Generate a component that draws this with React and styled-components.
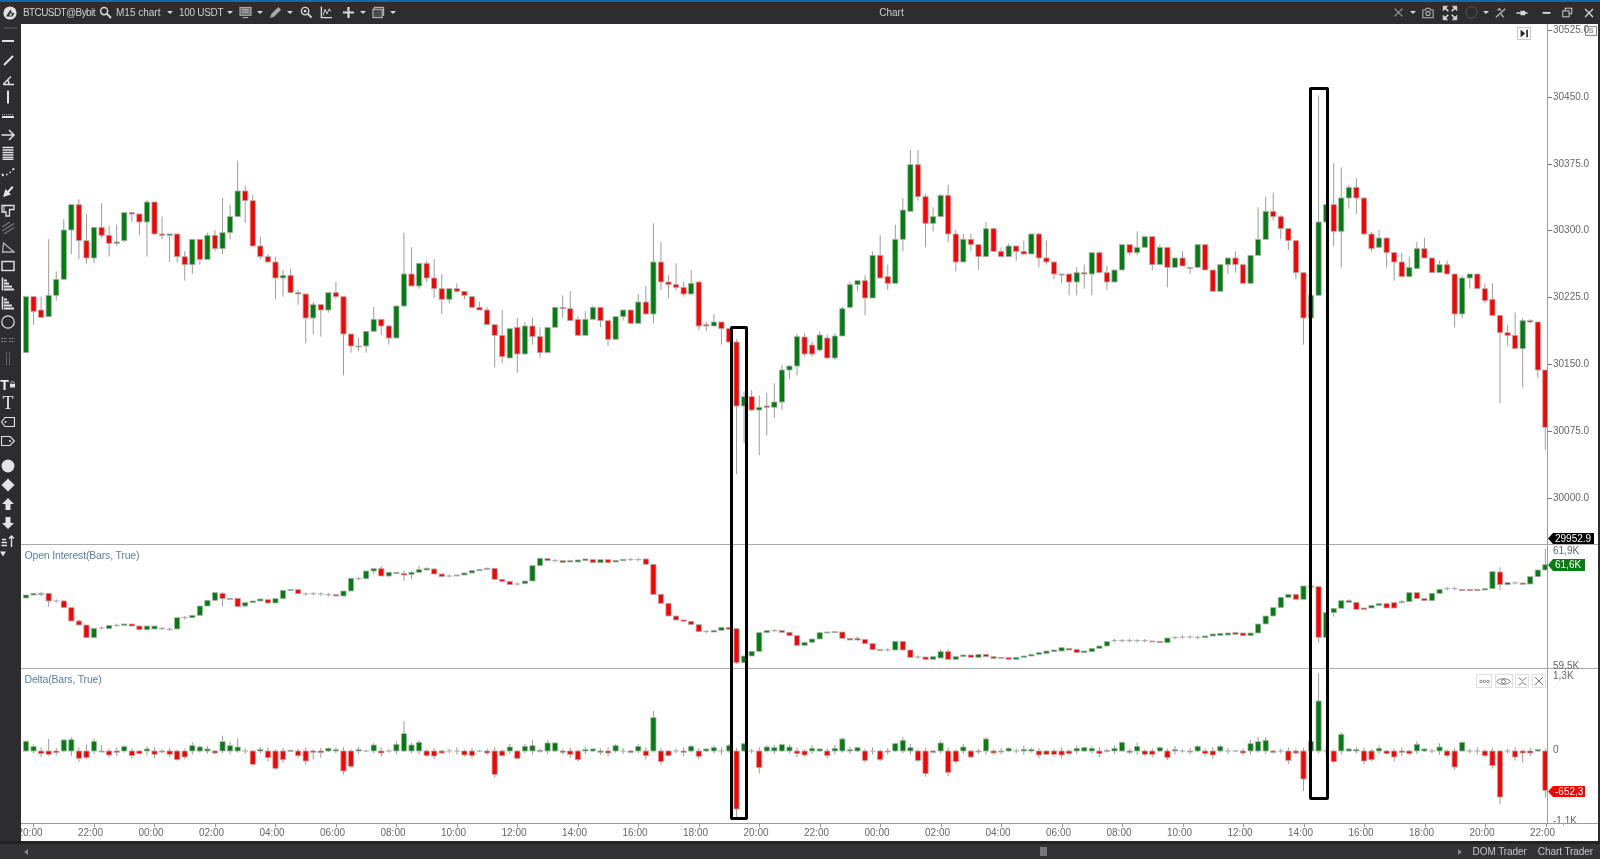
import React from 'react'
import styled, { createGlobalStyle } from 'styled-components'

const GlobalStyle = createGlobalStyle`
html, body {
  margin: 0;
  height: 100%;
  overflow: hidden;
  background: #fff;
  font-family: "Liberation Sans", Arial, sans-serif;
}
`

// price candles: colour, body top, body bottom, wick top, wick bottom
// values are measured in thirds of a pixel from the origin of each block
const PRICE_A = `g 290 458,r 290 334 290 374,r 330 352 290 352,g 286 350 118 350,g 238 286 214 302,g 90 238 58 238,g 14 90 14 162,r 14 122 -2 178,r 122 174 42 190,g 82 174 82 190,
r 82 106 10 114,r 106 130 78 170,g 126 130 74 138,g 38 122 38 126,r 38 42 34 66,r 42 66 42 106,g 6 66 0 170,r 6 102,r 102 106 50 118,g 102 106 102 186,
r 102 170 102 186,r 170 194 154 242,g 118 194 118 222,r 118 178 118 194,g 106 178 98 178,r 106 146 90 154,g 98 146 -6 162,g 50 98 14 118,g -27 50 -118 50,r -27 2 -42 70,
r 2 138 -15 138,r 138 170 110 178,r 170 186 162 186,r 186 234 170 298,g 226 234 210 290,r 226 278 206 278,r 278 282 270 314,r 282 354 282 430,g 314 354 306 402,r 314 330 314 410,
g 278 330 278 338,r 278 290 246 298,r 290 402 290 526,r 402 438 402 458,r 438 438 414 454,g 394 438 394 458,g 358 394 322 394,r 358 378 358 406,r 378 414 374 434,g 318 414,
g 222 318 98 322,r 222 258 142 258,g 190 258 190 266,r 190 234 182 246,r 234 266 178 294,r 266 298 222 342,g 266 298 266 310,r 266 274 250 278,r 274 286 274 298,r 290 322,
r 322 330 306 330,r 330 374 322 374,r 374 406 374 502,r 406 470 330 490,g 386 474,r 382 462 354 518,g 378 462 366 462,r 378 410 354 434,r 410 458 382 474,g 382 458,
g 322 382,r 322 326 286 354,r 326 362 274 362,r 358 406 350 406,g 358 406 334 406,g 322 358 318 358,r 322 362 322 382,r 362 418 362 438,g 350 418,g 330 350 330 362,
r 330 370,g 306 370 282 370,r 306 342 258 342,g 186 342 70 370,r 186 246 126 270,r 246 254 226 294,r 254 262 190 270,r 262 282 246 290,g 250 282 210 282,r 246 378 246 390,
r 374 378 366 394,g 366 378 342 378,r 366 386 366 434,r 386 426,r 426 618 418 822,g 590 618 574 730,r 590 630 570 634,g 622 630 586 766,r 618 622 578 706,g 606 622 550 654,
g 510 606 494 630,g 498 510 498 538,g 410 498 402 526,r 411 462 400 470,r 435 462 425 470,g 405 450 395 455,r 414 474 405 474,g 408 474 400 480`

const PRICE_B = `g 536 618 530 618,g 464 532 456 536,g 452 464 452 484,r 452 504 436 556,g 376 504 364 504,r 376 444 316 444,r 440 460 404 480,g 328 460 284 460,g 240 328 204 364,g 104 244 60 244,
r 104 200 60 212,r 200 280 192 352,g 260 280 232 304,g 196 260 192 260,r 196 312 164 336,r 312 396 300 424,g 328 396 312 396,r 328 344 312 364,r 344 380 344 420,g 296 380 276 380,
r 296 364 292 364,r 364 380 352 380,g 348 380 340 380,r 348 364 348 392,r 364 372 332 376,g 312 372,r 312 384 308 412,r 384 396 332 404,r 396 432 396 448,r 432 433 432 460,
r 432 456 432 496,g 428 456 412 496,r 428 432 404 476,g 368 432 368 496,r 368 428 364 428,r 428 456 408 480,g 420 456,g 344 420,r 344 368 344 376,g 352 368 304 376,
g 320 352,r 320 404 320 420,g 352 404 344 404,r 352 412 352 472,g 384 412,r 384 408 364 408,r 412 412 412 432,g 344 412`

const PRICE_C = `r 494 570,r 570 634,g 554 634,g 534 554 534 582,r 534 554 514 578,r 554 610,g 526 610,g 478 526 382 526,g 394 478 350 478,r 394 410 338 422,
r 410 446 406 478,r 446 482 446 510,r 482 578 482 598,r 578 714 578 794,g 646 714 620 750,g 426 646 46 646,g 374 426,r 374 454 250 498,g 354 454 262 562,g 322 354 314 386,
r 322 354 294 402,r 354 462,r 462 506 456 514,g 474 502 450 502,r 474 518 474 562,r 518 546 518 602,r 546 590 518 590,g 562 590 530 590,g 506 566 486 566,r 506 534 474 534,
r 534 578,g 554 578 542 578,r 554 582 542 582,r 582 702 582 742,g 594 702 586 714,g 582 594 582 626,r 582 626,r 626 662 610 670,r 658 706 610 706,r 706 758 706 970,
r 758 766 734 798,r 766 806 698 806,g 722 806 714 922,r 722 726 718 730,r 726 870 726 894,r 870 1042 870 1110`

// open interest, "d" is a doji drawn as a small grey dash
const OI_DATA = `g 165 174,g 160 165,g 160 163 155 168,r 160 183 160 200,d 183,r 183 203 180 203,r 203 243,r 243 255 238 255,r 255 293,g 265 293,
d 264,g 256 266,d 256,g 252 256,r 252 258,r 258 269 258 272,g 258 269 258 272,g 258 267,d 266,d 268,
g 233 267,d 233,g 226 233,g 198 226,g 181 198,g 158 181,r 160 176 156 200,r 175 176,r 175 200,g 188 198 188 202,
g 183 188,g 177 183,r 179 189,g 176 189,g 151 176,g 149 151,r 149 161,d 162,d 161,d 162,
d 164,r 164 168,g 153 168,g 115 153,d 116,g 93 116,g 86 93 86 103,r 86 108 78 108,g 97 108 97 112,g 97 101,
r 100 105 92 122,g 97 103 94 118,g 89 97 78 97,g 85 90 82 90,r 87 102 84 102,r 102 110,d 108,g 105 108,g 99 105,g 92 99,
g 88 92,g 85 88 82 88,r 85 118,r 118 124,r 124 134,d 132,g 123 131,g 77 123,g 55 77,r 56 62,
d 62,r 62 67,g 62 66,g 60 66,g 57 62,r 59 68,g 59 68,r 59 68,g 61 66,g 58 62,
d 59,d 59,r 57 73,r 73 163,r 163 190,r 190 228,r 228 240,r 240 244,r 244 254,r 254 275,
d 275,g 271 276,g 262 271,r 263 268,r 266 368 266 372,g 348 368,g 334 348,g 278 334,g 272 278,d 272,
r 272 277,r 277 287,r 287 316,g 307 316,g 297 307,g 278 297,g 276 278,g 275 278,r 276 295,r 295 300,
r 295 300 290 302,r 298 311,r 311 329,r 329 332,d 330,g 304 330,r 304 330,r 330 352,d 351,r 351 358,
g 350 358,g 335 354 328 354,r 335 358 328 358,g 350 358,g 345 350,r 345 352,g 343 352,r 343 350,r 350 355,r 352 355,
r 353 358,g 352 358,g 348 352,g 343 348,g 338 343,g 333 340,g 330 335,g 323 333,r 325 330,r 328 338,
g 333 338,g 325 335,g 318 325,g 305 318,d 302,d 302,d 302,d 302,d 302,r 303 305,
r 304 308,g 294 308,d 293,d 291,d 291,d 292,g 288 293,g 282 288,g 280 286,g 279 285,
r 278 283,r 279 287,g 279 287,g 252 279,g 228 252,g 203 228,g 172 203,g 163 172,r 163 178,g 138 178,
g 138 140,r 140 292 140 308,g 218 292,g 205 218 205 230,g 182 205,r 182 187 178 187,r 187 208,r 204 208,g 196 204,g 191 196,
r 191 204,r 188 204,g 185 188 180 190,g 158 185,r 158 176,r 176 182,g 160 182,g 148 160,d 146,d 146,
r 148 152,r 148 152,r 148 152,g 146 150,g 95 146,r 96 134 82 150,g 128 134,d 129,r 129 133,g 110 132,
g 90 110,g 74 90 26 90`

// delta value, optional :wick end, signed, up from the zero line
const DELTA_DATA = `29 13 -8 -10:36 -5 33 34:-15 -22 -20:20 29 -1:18 -12 -4 13 -14 -8 6:-14 -10 -2
-10 -26 -18 16 12 6 -6 28:46 16 12:38 0 -40 5 -20 -52 -26 2 -14 -30 -4:-25 -5:-20 8 4 -60 -46 4 0 18 -6 0 20 52:90
18 26:32 -14 -15 -6 0 0 -12 -14 0 -6 -70:-80 -14 12 -22 14 16:34 2 24 24 -4 -10 -26 4 6 -4 -6 16 0 -4 14 -14 100:120
-32 -14 0 -4 14 -16 6 10 0:-12 16 -174:-200 22 0 -50:-68 12 10 19 12 -8
-12 8 6 -14 8 36 4 10 -28 0 -26 -2 22 32:42 10 -28 -68 -4 24 -64 -32 12 -18 -2 36:42 -6 -1 8 0 5 5 -12 -10 -10 -12 -8
8 10 8 -8 2 8 26 -4 14 -10 -10 10 -20 4 0 -1 14 -8 -12 14 0 0 -6 22 28:42 32:42 -4 0 -28 -6 -84:-120 28 150:234 0 -32
50:56 6 4 -30 -26 8 -8 -18:-32 -4 -8 20 6 0 12 -14 -48 26 0 0 -14 -44 -138:-160 0 -18 -6:-34 -6 4 -118:-140`

const STEP = 7.559
const FIRST_X = 26

const parseBlock = (text, origin) =>
  text.split(',').map((row) => {
    const [c, t, b = t, wt, wb] = row.trim().split(/\s+/)
    const top = Number(t)
    const bottom = Number(b)
    const wickTop = wt !== undefined ? Number(wt) : c === 'd' ? top - 5 : top
    const wickBottom = wb !== undefined ? Number(wb) : c === 'd' ? bottom + 5 : bottom
    return {
      c,
      top: origin + top / 3,
      bottom: origin + bottom / 3,
      wickTop: origin + wickTop / 3,
      wickBottom: origin + wickBottom / 3,
    }
  })

const priceCandles = [
  ...parseBlock(PRICE_A, 200),
  ...parseBlock(PRICE_B, 130),
  ...parseBlock(PRICE_C, 80),
]
const oiCandles = parseBlock(OI_DATA, 540)
const ZERO = 751
const deltaCandles = DELTA_DATA.trim()
  .split(/\s+/)
  .map((item, i) => {
    const [v, w] = item.split(':').map(Number)
    const extra = 3 + ((i * 7) % 5) * 2
    const up = w !== undefined && w > 0 ? w : v > 0 ? v + extra : extra
    const down = w !== undefined && w < 0 ? w : v < 0 ? v - extra : -extra
    return {
      c: v === 0 ? 'd' : v > 0 ? 'g' : 'r',
      top: ZERO - Math.max(v, 0) / 3,
      bottom: ZERO - Math.min(v, 0) / 3,
      wickTop: ZERO - up / 3,
      wickBottom: ZERO - down / 3,
    }
  })

const BODY = { g: '#007f0e', r: '#ff0000', d: '#8a8a8a' }

const CandleChart = ({ top, height, candles }) => (
  <Plot viewBox={`21 ${top} 1526 ${height}`} width="1526" height={height}>
    <rect x="18" y="350" width="3" height="3" fill={BODY.r} />
    {candles.map((k, i) => {
      const x = FIRST_X + STEP * i
      return (
        <g key={i}>
          <line x1={x} x2={x} y1={k.wickTop} y2={k.wickBottom} stroke="#9c9c9c" strokeWidth="1" />
          {k.c === 'd' ? (
            <line x1={x - 3} x2={x + 3} y1={k.top} y2={k.top} stroke="#a8a8a8" strokeWidth="1" />
          ) : (
            <rect
              x={x - 2.6}
              y={k.top}
              width="5.2"
              height={Math.max(k.bottom - k.top, 1)}
              fill={BODY[k.c]}
              stroke="#aeb0ae"
              strokeWidth=".8"
            />
          )}
        </g>
      )
    })}
  </Plot>
)

const Ico = ({ size = 14, children, ...rest }) => (
  <svg width={size} height={size} viewBox="0 0 14 14" fill="none" stroke="currentColor" {...rest}>
    {children}
  </svg>
)

const Shell = styled.div`
  height: 859px;
  width: 1600px;
  display: flex;
  flex-direction: column;
  background: #2d2d30;
  filter: blur(0.4px);
`
const TopBar = styled.div`
  height: 24px;
  box-sizing: border-box;
  border-top: 2px solid #0a6db4;
  display: flex;
  align-items: center;
  color: #d4d4d4;
  font-size: 10px;
  padding: 0 0 1px 3px;
`
const Slot = styled.div`
  width: ${(p) => p.$w}px;
  margin-left: ${(p) => p.$ml || 0}px;
  flex: none;
  display: flex;
  justify-content: center;
  align-items: center;
  color: ${(p) => p.$color || '#d8d8d8'};
`
const BarText = styled.span`
  width: ${(p) => p.$w}px;
  margin-left: ${(p) => p.$ml || 0}px;
  flex: none;
  letter-spacing: ${(p) => p.$track || 0}px;
  white-space: nowrap;
  color: #cfcfcf;
`
const Caret = styled.span`
  width: 0;
  height: 0;
  border-left: 3.5px solid transparent;
  border-right: 3.5px solid transparent;
  border-top: 3.5px solid #d8d8d8;
`
const Title = styled.div`
  flex: 1;
  text-align: center;
  padding-right: 4px;
  color: #cfcfcf;
`
const Middle = styled.div`
  flex: 1;
  display: flex;
  min-height: 0;
`
const ToolRail = styled.div`
  width: 21px;
  flex: none;
  display: flex;
  flex-direction: column;
  color: #e4e4e4;
`
const Grip = styled.div`
  height: 8px;
  margin: 0 4px;
  background: radial-gradient(circle, #666 0.6px, transparent 0.8px) 0 3px / 2px 2px repeat-x;
`
const ToolCell = styled.div`
  height: 18.7px;
  flex: none;
  display: flex;
  align-items: ${(p) => (p.$corner ? 'flex-start' : 'center')};
  justify-content: ${(p) => (p.$corner ? 'flex-start' : 'center')};
  padding-right: 5px;
  box-sizing: border-box;
`
const ToolLetter = styled.span`
  font-family: "Liberation Serif", serif;
  font-size: 18px;
  line-height: 18px;
  color: #ececec;
`
const BoldLetter = styled.span`
  font-weight: 700;
  font-size: 14px;
  line-height: 14px;
  color: #ececec;
`
const ToolGap = styled.div`
  height: 7px;
  flex: none;
  margin: 0 3px;
  background: radial-gradient(circle, #555 0.5px, transparent 0.7px) 0 2px / 2px 2px repeat-x;
`
const ChartArea = styled.div`
  flex: 1;
  display: flex;
  flex-direction: column;
  position: relative;
  background: #fff;
  border-right: 2px solid #2d2d30;
`
const Pane = styled.div`
  height: ${(p) => p.$h}px;
  flex: none;
  display: flex;
  position: relative;
  border-bottom: ${(p) => (p.$line ? '1px solid #a9a9a9' : '0')};
`
const Plot = styled.svg`
  display: block;
  flex: none;
`
const Scale = styled.div`
  flex: 1;
  border-left: 1px solid #9c9c9c;
  display: flex;
  flex-direction: column;
  padding-top: ${(p) => p.$pad}px;
  font-size: 10px;
  line-height: 10px;
  color: #666;
  position: relative;
`
const ScaleRow = styled.div`
  height: ${(p) => p.$h}px;
  flex: none;
  display: flex;
  padding-left: ${(p) => (p.$tick ? 0 : 5)}px;
  white-space: nowrap;
  &::before {
    content: '';
    display: ${(p) => (p.$tick ? 'block' : 'none')};
    width: 4px;
    height: 1px;
    margin: 5px 1px 0 0;
    background: #777;
  }
`
const PriceTag = styled.div`
  position: absolute;
  left: 0;
  top: ${(p) => p.$top}px;
  width: ${(p) => p.$w}px;
  height: ${(p) => p.$hgt}px;
  box-sizing: border-box;
  padding-left: 7px;
  background: ${(p) => p.$bg};
  color: #fff;
  font-size: 10px;
  line-height: ${(p) => p.$hgt}px;
  white-space: nowrap;
  clip-path: polygon(5px 0, 100% 0, 100% 100%, 5px 100%, 0 50%);
`
const Legend = styled.div`
  position: absolute;
  left: 3.5px;
  top: ${(p) => p.$top}px;
  font-size: 10.5px;
  line-height: 12px;
  letter-spacing: -0.17px;
  color: #5c7da3;
`
const SmallBox = styled.div`
  position: absolute;
  right: 1px;
  top: 2px;
  width: 10px;
  height: 8px;
  border: 1px solid #8a8a8a;
  font-size: 7px;
  line-height: 8px;
  text-align: center;
  color: #555;
`
const JumpButton = styled.div`
  position: absolute;
  left: 1496px;
  top: 3px;
  width: 14px;
  height: 13px;
  box-sizing: border-box;
  border: 1px solid #c9c9c9;
  display: flex;
  align-items: center;
  justify-content: center;
  color: #222;
`
const PaneButtons = styled.div`
  position: absolute;
  left: 1455px;
  top: 5px;
  display: flex;
  gap: 2.5px;
  color: #666;
`
const PaneButton = styled.div`
  width: ${(p) => p.$w}px;
  height: 14px;
  box-sizing: border-box;
  border: 1px solid #e0e0e0;
  background: #fff;
  display: flex;
  align-items: center;
  justify-content: center;
`
const TimeAxis = styled.div`
  height: 18px;
  flex: none;
  box-sizing: border-box;
  border-top: 1px solid #9c9c9c;
  display: grid;
  grid-template-columns: repeat(26, 60.5px);
  margin-left: -18.25px;
  overflow: hidden;
  font-size: 10px;
  color: #666;
  clip-path: inset(0 0 0 18.25px);
`
const TimeCell = styled.div`
  position: relative;
  line-height: 18px;
  text-align: center;
  padding-right: 6px;
  white-space: nowrap;
  &::before {
    content: '';
    position: absolute;
    left: 50%;
    top: 0;
    width: 1px;
    height: 3px;
    background: #999;
  }
`
const Highlight = styled.div`
  position: absolute;
  left: ${(p) => p.$x}px;
  top: ${(p) => p.$y}px;
  width: ${(p) => p.$w}px;
  height: ${(p) => p.$hgt}px;
  box-sizing: border-box;
  border: 3px solid #000;
  border-radius: 2px;
  pointer-events: none;
`
const BottomBar = styled.div`
  height: 18px;
  flex: none;
  box-sizing: border-box;
  border-top: 3px solid #232325;
  background: #333337;
  display: flex;
  align-items: center;
  padding-left: 24px;
  font-size: 10px;
  letter-spacing: -0.08px;
  color: #c8c8c8;
`
const ScrollArrow = styled.span`
  width: 0;
  height: 0;
  border-top: 3px solid transparent;
  border-bottom: 3px solid transparent;
  border-${(p) => (p.$dir === 'left' ? 'right' : 'left')}: 4px solid #888;
`
const Thumb = styled.div`
  width: 7px;
  height: 9px;
  background: #77777a;
  margin-left: 1012px;
`
const BottomRight = styled.div`
  margin-left: auto;
  display: flex;
  align-items: center;
  gap: 11px;
  padding-right: 7px;
`

const toolRows = [
  <Ico><rect x="1" y="6" width="12" height="2" fill="currentColor" stroke="none" /></Ico>,
  <Ico><path d="M3 12L12 3" strokeWidth="2" /></Ico>,
  <Ico><path d="M2 12.5H13M2.5 12L10 4.5M8 12.5a7 7 0 0 0-1.5-4.5" strokeWidth="1.4" /></Ico>,
  <Ico><path d="M7 0.5V13.5" strokeWidth="2" /></Ico>,
  <Ico><path d="M1 8H13" strokeWidth="2" /><path d="M1 5.5H13" strokeWidth="1" strokeDasharray="1 1" opacity=".7" /></Ico>,
  <Ico><path d="M0.5 7H13M8 2L13 7L8 12" strokeWidth="1.5" /></Ico>,
  <Ico><path d="M1.5 1.5H12.5M1.5 4H12.5M1.5 6.5H12.5M1.5 9H12.5M1.5 11.5H12.5" strokeWidth="1.5" /><path d="M1.5 13.5H12.5" strokeWidth="1.5" /></Ico>,
  <Ico><path d="M1 10.5C5 11 9 8 13 3.5" strokeWidth="1.2" strokeDasharray="2 2" /><circle cx="1.5" cy="9.5" r="1" fill="currentColor" stroke="none" /><circle cx="12.5" cy="4" r="1" fill="currentColor" stroke="none" /></Ico>,
  <Ico><path d="M2 13L4.5 5L6.5 7L11 2L12.5 3.5L8 8.5L10 10.5Z" fill="currentColor" stroke="none" /></Ico>,
  <Ico><path d="M1 2.5H13V6.5H8.5V13H5V9H1Z" strokeWidth="1.3" /><path d="M3 2.5V9" strokeWidth="1" /></Ico>,
  <Ico color="#7a7a7a"><path d="M1 6L9 1M1 10L13 2.5M3 13L13 6.5" strokeWidth="1.2" /></Ico>,
  <Ico color="#b5b5b5"><path d="M1.5 12H13L2.5 3Z" strokeWidth="1.3" /></Ico>,
  <Ico><rect x="1" y="2.5" width="12" height="9" strokeWidth="1.4" /></Ico>,
  <Ico><path d="M1.5 0.5V13.5" strokeWidth="1.6" /><path d="M3 12.5H13M3 9.5H11M3 6.5H8M3 3.5H6" strokeWidth="1.8" /></Ico>,
  <Ico><path d="M1.5 0.5V13.5" strokeWidth="1.6" /><path d="M3 12.5H13M3 9.5H11M3 6.5H8M3 3.5H6" strokeWidth="1.8" /></Ico>,
  <Ico><circle cx="7" cy="7" r="6.2" strokeWidth="1.2" /></Ico>,
  <Ico color="#9a9a9a"><path d="M0.5 5.5H6M8 5.5H13.5M0.5 8.5H6M8 8.5H13.5" strokeWidth="1" strokeDasharray="1.5 1" /></Ico>,
  <Ico color="#8a8a8a"><path d="M5.5 0.5V13.5M8.5 0.5V13.5" strokeWidth="1" strokeDasharray="1.5 1.2" /></Ico>,
]

const markRows = [
  <Ico><circle cx="7" cy="7" r="6.4" fill="currentColor" stroke="none" /></Ico>,
  <Ico><path d="M7 0.5L13.5 7L7 13.5L0.5 7Z" fill="currentColor" stroke="none" /></Ico>,
  <Ico><path d="M7 1L13 7H9.5V13H4.5V7H1Z" fill="currentColor" stroke="none" /></Ico>,
  <Ico><path d="M7 13L13 7H9.5V1H4.5V7H1Z" fill="currentColor" stroke="none" /></Ico>,
  <Ico><path d="M1 5.5H5M0.5 8.5H6M0.5 11.5H6" strokeWidth="1.4" /><path d="M10.5 13V2M8 4.5L10.5 2L13 4.5" strokeWidth="1.4" /></Ico>,
]

const MAIN_TICKS = ['30525.0', '30450.0', '30375.0', '30300.0', '30225.0', '30150.0', '30075.0', '30000.0']

const hours = ['20:00', '22:00', '00:00', '02:00', '04:00', '06:00', '08:00', '10:00', '12:00', '14:00', '16:00', '18:00']
const timeLabels = Array.from({ length: 26 }, (_, i) => hours[i % 12])

export default function App() {
  return (
    <>
      <GlobalStyle />
      <Shell>
        <TopBar>
          <Slot $w={14}>
            <Ico>
              <circle cx="7" cy="7" r="6.6" fill="#e2e2e2" stroke="none" />
              <path d="M3 10.5L7.5 3.5L9 7H11.5L9.5 10.5Z" fill="#2d2d30" stroke="none" />
              <path d="M6 9.5L8 6.5L9 9.5Z" fill="#e2e2e2" stroke="none" />
            </Ico>
          </Slot>
          <BarText $w={74} $ml={6} $track={-0.6}>BTCUSDT@Bybit</BarText>
          <Slot $w={16}>
            <Ico size={13}><circle cx="5.5" cy="5.5" r="3.8" strokeWidth="1.6" /><path d="M8.5 8.5L13 13" strokeWidth="2.2" /></Ico>
          </Slot>
          <BarText $w={50} $ml={3}>M15 chart</BarText>
          <Slot $w={8}><Caret /></Slot>
          <BarText $w={47} $ml={5} $track={-0.3}>100 USDT</BarText>
          <Slot $w={8}><Caret /></Slot>
          <Slot $w={16} $ml={3} $color="#a8a8a8">
            <Ico size={13}><rect x="1" y="1.5" width="12" height="8.5" fill="#6f6f6f" stroke="#b8b8b8" /><path d="M4 12.5H10M3.5 4H10.5M3.5 6.5H10.5" stroke="#c8c8c8" /></Ico>
          </Slot>
          <Slot $w={14}><Caret /></Slot>
          <Slot $w={16}>
            <Ico size={13}><path d="M1 13L2.5 8.5L10 1L13 4L5.5 11.5Z" fill="#a8a8a8" stroke="none" /></Ico>
          </Slot>
          <Slot $w={14}><Caret /></Slot>
          <Slot $w={18}>
            <Ico size={13}><circle cx="5.5" cy="5.5" r="4" strokeWidth="1.5" /><path d="M8.5 8.5L12.5 12.5" strokeWidth="2" /><circle cx="5.5" cy="5.5" r="1.5" fill="currentColor" stroke="none" /></Ico>
          </Slot>
          <Slot $w={22}>
            <Ico size={13}><path d="M1.5 0.5V12.5H13" strokeWidth="1.5" /><path d="M3.5 10L5.5 3.5L7.5 8.5L10 3L11.5 6" strokeWidth="1" /></Ico>
          </Slot>
          <Slot $w={22}>
            <Ico size={13}><path d="M7 1V13M1 7H13" strokeWidth="2.4" /></Ico>
          </Slot>
          <Slot $w={8}><Caret /></Slot>
          <Slot $w={22} $color="#b5b5b5">
            <Ico size={13}><rect x="2.5" y="1.5" width="10" height="8.5" strokeWidth="1.2" /><rect x="1" y="3.5" width="10" height="9" fill="#4a4a4d" strokeWidth="1.2" /></Ico>
          </Slot>
          <Slot $w={8}><Caret /></Slot>

          <Title>Chart</Title>

          <Slot $w={16} $color="#989898">
            <Ico size={9}><path d="M1 13L13 1M1 1L13 13" strokeWidth="2" /></Ico>
          </Slot>
          <Slot $w={14}><Caret /></Slot>
          <Slot $w={16} $color="#b8b8b8">
            <Ico size={12}><path d="M1 3.5H4L5 1.5H9L10 3.5H13V12.5H1Z" strokeWidth="1.2" /><circle cx="7" cy="7.5" r="2.4" strokeWidth="1.2" /></Ico>
          </Slot>
          <Slot $w={28}>
            <Ico size={16}>
              <path d="M1 1H5L1 5ZM13 1H9L13 5ZM1 13H5L1 9ZM13 13H9L13 9Z" fill="currentColor" stroke="currentColor" strokeWidth=".6" />
              <path d="M3 3L5.5 5.5M11 3L8.5 5.5M3 11L5.5 8.5M11 11L8.5 8.5" strokeWidth="1.4" />
            </Ico>
          </Slot>
          <Slot $w={14} $color="#5b5b5f">
            <Ico size={13}><circle cx="7" cy="7" r="6.2" strokeWidth="1" /></Ico>
          </Slot>
          <Slot $w={16}><Caret /></Slot>
          <Slot $w={14} $color="#b8b8b8">
            <Ico size={12}><path d="M1 12L12 2M3 4L5 2L7 4M7 8L10 12" strokeWidth="1.6" /></Ico>
          </Slot>
          <Slot $w={28}>
            <Ico size={12}><path d="M0.5 7H6M6 5H10V9H6ZM10 7H13.5" strokeWidth="1.5" fill="currentColor" /></Ico>
          </Slot>
          <Slot $w={20}>
            <Ico size={11}><path d="M2 7.5H12" strokeWidth="2.4" /></Ico>
          </Slot>
          <Slot $w={22}>
            <Ico size={11}><rect x="4" y="1.5" width="8.5" height="7" strokeWidth="1.2" /><rect x="1" y="5" width="8" height="7.5" fill="#2d2d30" strokeWidth="1.2" /></Ico>
          </Slot>
          <Slot $w={22}>
            <Ico size={10}><path d="M1.5 1.5L12.5 12.5M12.5 1.5L1.5 12.5" strokeWidth="1.8" /></Ico>
          </Slot>
        </TopBar>

        <Middle>
          <ToolRail>
            <Grip />
            {toolRows.map((icon, i) => <ToolCell key={i}>{icon}</ToolCell>)}
            <ToolGap />
            <ToolCell>
              <BoldLetter>T</BoldLetter>
              <Ico size={7}><rect x="2" y="6" width="10" height="7" fill="currentColor" stroke="none" /><path d="M4 6V3.5a3 3 0 0 1 6 0V6" strokeWidth="1.6" /></Ico>
            </ToolCell>
            <ToolCell><ToolLetter>T</ToolLetter></ToolCell>
            <ToolCell>
              <Ico><path d="M0.5 7L4 2.5H13.5V11.5H4Z" strokeWidth="1.2" /><circle cx="4.5" cy="7" r="1" fill="currentColor" stroke="none" /></Ico>
            </ToolCell>
            <ToolCell>
              <Ico><path d="M0.5 2.5H9L13.5 7L9 11.5H0.5Z" strokeWidth="1.2" /><circle cx="9" cy="7" r="1" fill="currentColor" stroke="none" /></Ico>
            </ToolCell>
            <ToolGap />
            {markRows.map((icon, i) => <ToolCell key={i}>{icon}</ToolCell>)}
            <ToolCell $corner>
              <Ico size={7}><path d="M0 1H12L6 11Z" fill="currentColor" stroke="none" /></Ico>
            </ToolCell>
          </ToolRail>

          <ChartArea>
            <Pane $h={520} $line>
              <CandleChart top={24} height={520} candles={priceCandles} />
              <Scale $pad={1}>
                {MAIN_TICKS.map((t) => <ScaleRow key={t} $h={66.8} $tick>{t}</ScaleRow>)}
                <SmallBox>S</SmallBox>
                <PriceTag $top={509} $w={46} $hgt={11} $bg="#000">29952.9</PriceTag>
              </Scale>
              <JumpButton>
                <Ico size={9}><path d="M1 1L8 7L1 13Z" fill="currentColor" stroke="none" /><path d="M11 1V13" strokeWidth="2.5" /></Ico>
              </JumpButton>
            </Pane>

            <Pane $h={123} $line>
              <CandleChart top={545} height={123} candles={oiCandles} />
              <Legend $top={4}>Open Interest(Bars, True)</Legend>
              <Scale $pad={1}>
                <ScaleRow $h={115}>61,9K</ScaleRow>
                <ScaleRow $h={10}>59,5K</ScaleRow>
                <PriceTag $top={14} $w={37} $hgt={12} $bg="#087d10">61,6K</PriceTag>
              </Scale>
            </Pane>

            <Pane $h={154}>
              <CandleChart top={669} height={154} candles={deltaCandles} />
              <Legend $top={4}>Delta(Bars, True)</Legend>
              <Scale $pad={2}>
                <ScaleRow $h={74}>1,3K</ScaleRow>
                <ScaleRow $h={71}>0</ScaleRow>
                <ScaleRow $h={10}>-1,1K</ScaleRow>
                <PriceTag $top={117} $w={37} $hgt={11} $bg="#ff0000">-652,3</PriceTag>
              </Scale>
              <PaneButtons>
                <PaneButton $w={16}>
                  <Ico size={11}><circle cx="2.5" cy="7" r="1.6" strokeWidth="1" /><circle cx="7" cy="7" r="1.6" strokeWidth="1" /><circle cx="11.5" cy="7" r="1.6" strokeWidth="1" /></Ico>
                </PaneButton>
                <PaneButton $w={18}>
                  <Ico size={15}><path d="M0.5 7C3 3.5 11 3.5 13.5 7C11 10.5 3 10.5 0.5 7Z" strokeWidth=".8" /><circle cx="7" cy="7" r="1.8" strokeWidth=".8" /></Ico>
                </PaneButton>
                <PaneButton $w={14}>
                  <Ico size={11}><path d="M2 2L7 6L12 2M2 12L7 8L12 12" strokeWidth="1.1" /></Ico>
                </PaneButton>
                <PaneButton $w={14}>
                  <Ico size={10}><path d="M1.5 1.5L12.5 12.5M12.5 1.5L1.5 12.5" strokeWidth="1.3" /></Ico>
                </PaneButton>
              </PaneButtons>
            </Pane>

            <TimeAxis>
              {timeLabels.map((t, i) => <TimeCell key={i}>{t}</TimeCell>)}
            </TimeAxis>

            <Highlight $x={709} $y={302} $w={18} $hgt={494} />
            <Highlight $x={1288} $y={63} $w={20} $hgt={713} />
          </ChartArea>
        </Middle>

        <BottomBar>
          <ScrollArrow $dir="left" />
          <Thumb />
          <BottomRight>
            <ScrollArrow />
            <span>DOM Trader</span>
            <span>Chart Trader</span>
          </BottomRight>
        </BottomBar>
      </Shell>
    </>
  )
}
